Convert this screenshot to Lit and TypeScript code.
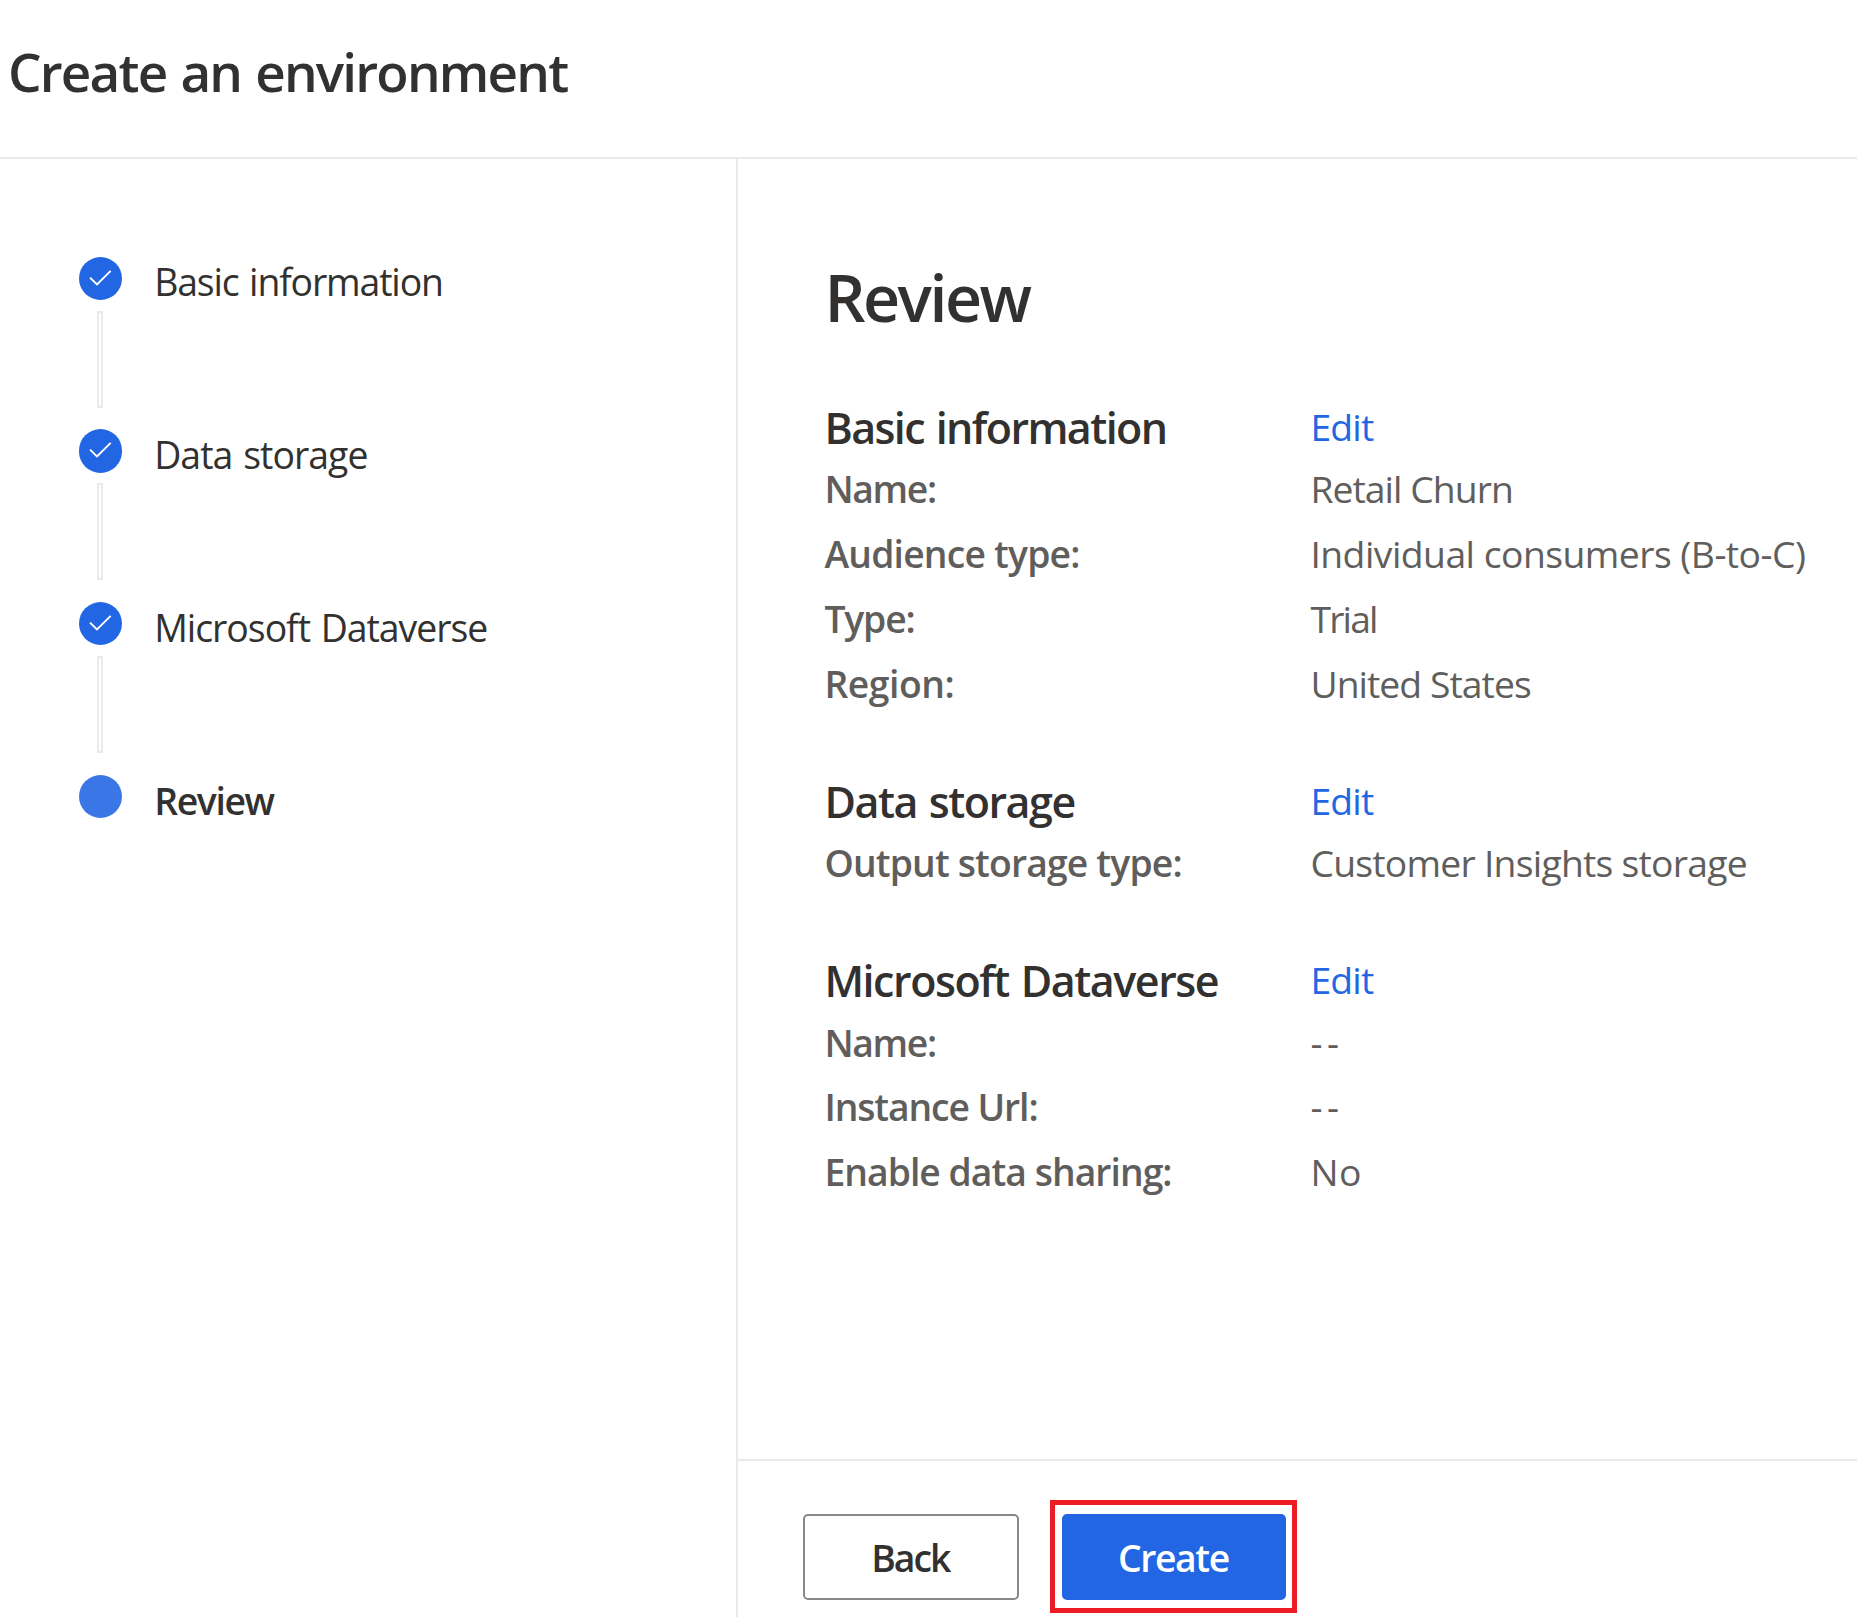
import { LitElement, html, css, svg, nothing } from 'lit';
import { customElement, property } from 'lit/decorators.js';
import { classMap } from 'lit/directives/class-map.js';
import { styleMap } from 'lit/directives/style-map.js';

/** A piece of text and its tracking in pixels. */
interface Label {
  text: string;
  track: number;
}

interface Section {
  title: Label;
  rows: { name: Label; value: Label }[];
}

const l = (text: string, track: number): Label => ({ text, track });
const tracked = (label: Label) => styleMap({ letterSpacing: `${label.track}px` });

const STEPS: { label: Label; done: boolean }[] = [
  { label: l('Basic information', -1.15), done: true },
  { label: l('Data storage', -0.95), done: true },
  { label: l('Microsoft Dataverse', -1.02), done: true },
  { label: l('Review', -1.4), done: false },
];

const SECTIONS: Section[] = [
  {
    title: l('Basic information', -1.58),
    rows: [
      { name: l('Name:', -1.35), value: l('Retail Churn', -0.95) },
      { name: l('Audience type:', -0.8), value: l('Individual consumers (B-to-C)', -0.53) },
      { name: l('Type:', -1.17), value: l('Trial', -1.8) },
      { name: l('Region:', -0.45), value: l('United States', -0.95) },
    ],
  },
  {
    title: l('Data storage', -1.46),
    rows: [{ name: l('Output storage type:', -0.83), value: l('Customer Insights storage', -0.75) }],
  },
  {
    title: l('Microsoft Dataverse', -1.44),
    rows: [
      { name: l('Name:', -1.35), value: l('--', 4.5) },
      { name: l('Instance Url:', -1.1), value: l('--', 4.5) },
      { name: l('Enable data sharing:', -0.96), value: l('No', 0.5) },
    ],
  },
];

@customElement('wizard-steps')
export class WizardSteps extends LitElement {
  static styles = css`
    :host {
      display: block;
    }
    .step {
      display: flex;
      gap: 32px;
      height: 172.8px;
    }
    .marker {
      display: flex;
      flex-direction: column;
      align-items: center;
      width: 43.2px;
    }
    .dot {
      display: block;
      flex: none;
      width: 43.2px;
      height: 43.2px;
      border-radius: 50%;
      background: #3b76e6;
    }
    .dot.done {
      background: #2266e3;
    }
    .line {
      box-sizing: border-box;
      width: 6px;
      height: 97px;
      margin: 10.8px 1px 0 0;
      border: 2px solid #eaeaea;
    }
    .label {
      margin-top: 3.7px;
      font-size: 37.4px;
      line-height: 43.2px;
      word-spacing: 2px;
      white-space: nowrap;
    }
    .label.current {
      font-weight: 600;
    }
  `;

  render() {
    return STEPS.map(
      ({ label, done }, i) => html`
        <div class="step">
          <div class="marker">
            <svg class=${classMap({ dot: true, done })} viewBox="0 0 43.2 43.2">
              ${done
                ? svg`<path d="M11 20.6 L18 27.4 L31.7 13.9" fill="none" stroke="#fff" stroke-width="2"/>`
                : nothing}
            </svg>
            ${i < STEPS.length - 1 ? html`<div class="line"></div>` : nothing}
          </div>
          <div class=${classMap({ label: true, current: !done })} style=${tracked(label)}>${label.text}</div>
        </div>
      `,
    );
  }
}

@customElement('review-section')
export class ReviewSection extends LitElement {
  @property({ attribute: false }) section!: Section;

  static styles = css`
    :host {
      display: grid;
      grid-template-columns: 486px 1fr;
      grid-template-rows: 53.6px;
      grid-auto-rows: 64.8px;
      font-size: 37.3px;
      line-height: 64px;
      color: #605e5c;
      white-space: nowrap;
    }
    .title {
      margin: 0;
      font-size: 43px;
      font-weight: 600;
      line-height: 48.6px;
      word-spacing: 2px;
      color: #323130;
    }
    .edit {
      line-height: 46px;
      letter-spacing: -0.8px;
      color: #2266e3;
      text-decoration: none;
    }
    .name {
      font-weight: 600;
    }
  `;

  render() {
    const { title, rows } = this.section;
    return html`
      <h2 class="title" style=${tracked(title)}>${title.text}</h2>
      <a class="edit" href="#">Edit</a>
      ${rows.map(
        ({ name, value }) => html`
          <div class="name" style=${tracked(name)}>${name.text}</div>
          <div class="value" style=${tracked(value)}>${value.text}</div>
        `,
      )}
    `;
  }
}

@customElement('app-root')
export class AppRoot extends LitElement {
  static styles = css`
    :host {
      display: flex;
      flex-direction: column;
      box-sizing: border-box;
      height: 1617px;
      overflow: hidden;
      background: #fff;
      color: #323130;
      font-family: 'Open Sans', 'Noto Sans', sans-serif;
    }
    .header {
      box-sizing: border-box;
      flex: none;
      height: 159px;
      padding: 35px 8px 0;
      border-bottom: 2px solid #eaeaea;
    }
    .heading {
      margin: 0;
      font-size: 53px;
      font-weight: 600;
      line-height: 73px;
      letter-spacing: -1.8px;
      word-spacing: 2px;
    }
    .body {
      display: flex;
      flex: 1;
      min-height: 0;
    }
    .side {
      box-sizing: border-box;
      flex: none;
      width: 738px;
      padding: 97.6px 0 0 79px;
      border-right: 2px solid #eaeaea;
    }
    .main {
      display: flex;
      flex: 1;
      flex-direction: column;
      min-width: 0;
    }
    .content {
      display: flex;
      flex: 1;
      flex-direction: column;
      gap: 61px;
      min-height: 0;
      padding: 95px 0 0 86.4px;
    }
    .title {
      margin: 0 0 2.9px;
      font-size: 64.4px;
      font-weight: 600;
      line-height: 86px;
      letter-spacing: -2.5px;
    }
    .footer {
      box-sizing: border-box;
      display: flex;
      flex: none;
      align-items: flex-start;
      gap: 43.5px;
      height: 158px;
      padding: 53px 65px 0;
      border-top: 2px solid #eaeaea;
    }
    .button {
      box-sizing: border-box;
      width: 215.5px;
      height: 86px;
      padding: 2px 1px 0 0;
      border: 2px solid #8a8886;
      border-radius: 5px;
      background: #fff;
      color: #323130;
      font: 600 37.3px/80px 'Open Sans', 'Noto Sans', sans-serif;
      letter-spacing: -2px;
    }
    .button.primary {
      width: 223.8px;
      border-color: #2266e3;
      background: #2266e3;
      color: #fff;
      letter-spacing: -1.4px;
    }
    .callout {
      position: relative;
    }
    .callout::after {
      content: '';
      position: absolute;
      inset: -14px -11.5px -13px -12px;
      border: 5px solid #ed1c24;
      pointer-events: none;
    }
  `;

  render() {
    return html`
      <header class="header"><h1 class="heading">Create an environment</h1></header>
      <div class="body">
        <nav class="side"><wizard-steps></wizard-steps></nav>
        <main class="main">
          <div class="content">
            <h1 class="title">Review</h1>
            ${SECTIONS.map((section) => html`<review-section .section=${section}></review-section>`)}
          </div>
          <footer class="footer">
            <button class="button">Back</button>
            <div class="callout"><button class="button primary">Create</button></div>
          </footer>
        </main>
      </div>
    `;
  }
}
